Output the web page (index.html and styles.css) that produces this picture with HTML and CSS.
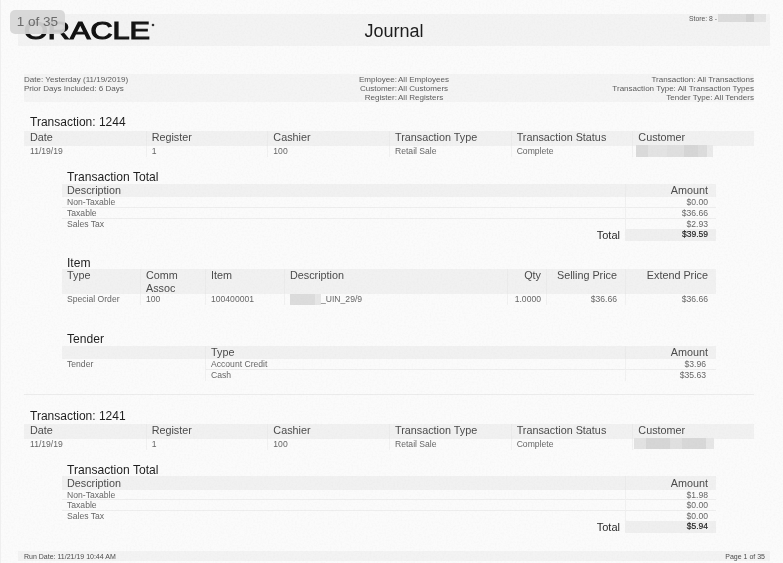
FILE: index.html
```html
<!DOCTYPE html>
<html lang="en">
<head>
<meta charset="utf-8">
<title>Journal</title>
<link rel="stylesheet" href="styles.css">
</head>
<body>
<main class="page">
  <div class="badge">1 of 35</div>
  <svg class="grain" width="783" height="563" aria-hidden="true">
    <filter id="noise" x="0" y="0" width="100%" height="100%">
      <feTurbulence type="fractalNoise" baseFrequency="0.55" numOctaves="2" seed="4"/>
      <feColorMatrix values="0 0 0 0 0.35  0 0 0 0 0.35  0 0 0 0 0.35  0 0 0 1.6 -0.62"/>
    </filter>
    <rect width="783" height="563" filter="url(#noise)"/>
  </svg>
  <header class="report-head">
    <div class="logo">
      <svg width="136" height="24" viewBox="0 0 136 24" aria-label="Oracle logo">
        <text class="logo-text" x="0" y="20" textLength="126" lengthAdjust="spacingAndGlyphs">ORACLE</text>
        <circle cx="129" cy="6" r="1.3" fill="#333"/>
      </svg>
    </div>
    <h1 class="report-title">Journal</h1>
    <div class="store"><span>Store: 8 -</span><span class="redact redact-store"></span></div>
  </header>

  <section class="filters">
    <div class="filter-left">
      <div>Date: Yesterday (11/19/2019)</div>
      <div>Prior Days Included: 6 Days</div>
    </div>
    <div class="filter-mid">
      <span class="lbl">Employee:</span><span>All Employees</span>
      <span class="lbl">Customer:</span><span>All Customers</span>
      <span class="lbl">Register:</span><span>All Registers</span>
    </div>
    <div class="filter-right">
      <div>Transaction: All Transactions</div>
      <div>Transaction Type: All Transaction Types</div>
      <div>Tender Type: All Tenders</div>
    </div>
  </section>

  <article class="txn">
    <h2 class="txn-title">Transaction: 1244</h2>
    <div class="grid grid-txn">
      <div class="th">Date</div><div class="th">Register</div><div class="th">Cashier</div><div class="th">Transaction Type</div><div class="th">Transaction Status</div><div class="th">Customer</div>
      <div class="td">11/19/19</div><div class="td">1</div><div class="td">100</div><div class="td">Retail Sale</div><div class="td">Complete</div><div class="td"><span class="redact redact-cust"></span></div>
    </div>

    <section class="sub sub-total">
      <h3 class="sub-title">Transaction Total</h3>
      <div class="grid grid-amount">
        <div class="th">Description</div><div class="th num">Amount</div>
        <div class="td ruled">Non-Taxable</div><div class="td num ruled">$0.00</div>
        <div class="td ruled">Taxable</div><div class="td num ruled">$36.66</div>
        <div class="td short">Sales Tax</div><div class="td num short">$2.93</div>
        <div class="total-label">Total</div><div class="total-value">$39.59</div>
      </div>
    </section>

    <section class="sub sub-item">
      <h3 class="sub-title">Item</h3>
      <div class="grid grid-item">
        <div class="th tall">Type</div><div class="th tall">Comm Assoc</div><div class="th tall">Item</div><div class="th tall">Description</div><div class="th tall num tight">Qty</div><div class="th tall num">Selling Price</div><div class="th tall num">Extend Price</div>
        <div class="td">Special Order</div><div class="td">100</div><div class="td">100400001</div><div class="td"><span class="redact redact-desc"></span>_UIN_29/9</div><div class="td num tight">1.0000</div><div class="td num">$36.66</div><div class="td num">$36.66</div>
      </div>
    </section>

    <section class="sub sub-tender">
      <h3 class="sub-title">Tender</h3>
      <div class="grid grid-tender">
        <div class="th"></div><div class="th">Type</div><div class="th num">Amount</div>
        <div class="td">Tender</div><div class="td ruled">Account Credit</div><div class="td num wide ruled">$3.96</div>
        <div class="td"></div><div class="td">Cash</div><div class="td num wide">$35.63</div>
      </div>
    </section>
  </article>

  <hr class="divider">

  <article class="txn txn-second">
    <h2 class="txn-title">Transaction: 1241</h2>
    <div class="grid grid-txn">
      <div class="th">Date</div><div class="th">Register</div><div class="th">Cashier</div><div class="th">Transaction Type</div><div class="th">Transaction Status</div><div class="th">Customer</div>
      <div class="td">11/19/19</div><div class="td">1</div><div class="td">100</div><div class="td">Retail Sale</div><div class="td">Complete</div><div class="td"><span class="redact redact-cust2"></span></div>
    </div>

    <section class="sub sub-total">
      <h3 class="sub-title">Transaction Total</h3>
      <div class="grid grid-amount">
        <div class="th">Description</div><div class="th num">Amount</div>
        <div class="td short ruled">Non-Taxable</div><div class="td num short ruled">$1.98</div>
        <div class="td ruled">Taxable</div><div class="td num ruled">$0.00</div>
        <div class="td short">Sales Tax</div><div class="td num short">$0.00</div>
        <div class="total-label">Total</div><div class="total-value">$5.94</div>
      </div>
    </section>
  </article>

  <footer class="report-foot">
    <span>Run Date: 11/21/19 10:44 AM</span>
    <span>Page 1 of 35</span>
  </footer>
</main>
</body>
</html>
```

FILE: styles.css
```css
* { box-sizing: border-box; }
html, body { margin: 0; padding: 0; }
body { width: 783px; height: 563px; overflow: hidden; background: #fbfbfb; font-family: "Liberation Sans", Arial, sans-serif; color: #666; }

.page { position: relative; width: 783px; height: 563px; padding-top: 14px; overflow: hidden; background: #fbfbfb; border-left: 1px solid #efefef; filter: blur(.2px); }
.page > * { margin-left: 17px; }

.grain { position: absolute; left: 0; top: 0; margin: 0; pointer-events: none; opacity: .06; z-index: 1; }

.badge { position: absolute; left: 9px; top: 10px; margin: 0; width: 55px; height: 24px; border-radius: 5px; background: rgba(214, 214, 214, .93); color: #6a6a6a; font-size: 13.5px; line-height: 23px; text-align: center; z-index: 2; }

.report-head { display: grid; grid-template-columns: 1fr auto 1fr; width: 752px; height: 32px; background: #f3f3f3; }
.logo { padding: 5px 0 0 6px; height: 32px; }
.logo svg { display: block; overflow: visible; }
.logo-text { font-family: "Liberation Sans", Arial, sans-serif; font-size: 23px; font-weight: 400; fill: #111; stroke: #111; stroke-width: 1.1px; }
.report-title { margin: 0; padding-top: 7px; font-size: 18px; line-height: 21px; font-weight: 400; color: #1c1c1c; }
.store { display: flex; justify-content: flex-end; padding-right: 4px; font-size: 6.8px; line-height: 9px; color: #555; gap: 1px; }

.redact { display: inline-block; background-color: #e6e6e6; }
.redact-store { width: 48px; height: 8px; background-image: linear-gradient(90deg, #dcdcdc 0 58%, #d2d2d2 58% 75%, #e4e4e4 75%); }
.redact-cust { width: 77px; height: 12px; margin: -1px 0 0 -2px; background-image: linear-gradient(90deg, #dadada 0 16%, #e3e3e3 16% 40%, #dfdfdf 40% 62%, #d6d6d6 62% 80%, #dcdcdc 80% 92%, #eaeaea 92%); }
.redact-cust2 { width: 80px; height: 11px; margin: -1px 0 0 -4px; background-image: linear-gradient(90deg, #e2e2e2 0 15%, #d6d6d6 15% 45%, #e0e0e0 45% 60%, #d8d8d8 60% 90%, #e6e6e6 90%); }
.redact-desc { width: 31px; height: 11px; vertical-align: top; background-image: linear-gradient(90deg, #dcdcdc 0 80%, #e6e6e6 80%); }

.filters { display: grid; grid-template-columns: 334px 93px 1fr; width: 730px; height: 28px; margin: 28px 0 0 23px !important; padding-top: 1px; background: #f4f4f4; font-size: 8.05px; line-height: 9px; color: #5c5c5c; }
.filter-mid { display: grid; grid-template-columns: 39px 1fr; column-gap: 1px; align-content: start; }
.lbl { text-align: right; white-space: nowrap; }
.filter-right { text-align: right; }

.txn { width: 730px; margin-left: 23px !important; }
.txn-title { margin: 12px 0 0; padding-left: 6px; height: 17px; font-size: 12px; line-height: 16px; font-weight: 400; color: #1e1e1e; }
.txn-second .txn-title { line-height: 18px; }

.grid { display: grid; }
.grid-txn { grid-template-columns: repeat(6, 1fr); }
.grid-amount { grid-template-columns: 563px 91px; }
.grid-item { grid-template-columns: 78px 65px 79px 223px 39px 79px 91px; }
.grid-tender { grid-template-columns: 143px 420px 91px; }

.th { padding: 0 5px; height: 15px; background: #f1f1f1; border-left: 1px solid #ebebeb; font-size: 10.8px; line-height: 13px; color: #4a4a4a; }
.td { padding: 0 5px; height: 11px; border-left: 1px solid #f1f1f1; font-size: 8.6px; line-height: 11px; color: #666; }
.grid > .th:first-child { border-left: 0; padding-left: 6px; }
.sub .grid > .th:first-child { padding-left: 5px; }
.grid-txn .td:nth-child(7) { border-left: 0; padding-left: 6px; }
.num { text-align: right; padding-right: 8px; }
.tight { padding-right: 5px; }
.wide { padding-right: 10px; }
.ruled { border-bottom: 1px solid #eeeeee; }
.short { height: 10px; line-height: 10px; }

.sub { width: 654px; margin-left: 38px; }
.sub-title { margin: 0; padding-left: 5px; height: 14px; font-size: 12.1px; line-height: 14px; font-weight: 400; color: #1e1e1e; }
.sub-total { margin-top: 13px; }
.sub-item { margin-top: 14px; }
.sub-item .sub-title { line-height: 16px; }
.sub-tender { margin-top: 27px; }
.sub .th { height: 13px; line-height: 13px; }
.sub .tall { height: 25px; line-height: 12.5px; }
.sub > .grid > .td { padding-left: 5px; }
.sub-total .td:nth-child(odd) { border-left: 0; }
.sub-tender .td:nth-child(4), .sub-tender .td:nth-child(7) { border-left: 0; }
.sub-item .td:nth-child(8) { border-left: 0; }

.total-label { height: 12px; padding-right: 5px; text-align: right; font-size: 11px; line-height: 13px; color: #2a2a2a; }
.total-value { height: 12px; padding-right: 8px; background: #efefef; text-align: right; font-size: 8.5px; line-height: 11px; color: #1a1a1a; -webkit-text-stroke: .15px #1a1a1a; }

.divider { width: 730px; height: 1px; margin: 13px 0 0 23px !important; border: 0; background: #ececec; }
.txn-second .sub-total { margin-top: 12px; }
.txn-second .sub-title { line-height: 16px; }
.txn-second .sub .th { height: 14px; line-height: 14px; }

.report-foot { display: flex; justify-content: space-between; width: 752px; height: 10px; margin-top: 18px; padding: 0 5px 0 6px; background: #f3f3f3; font-size: 7px; line-height: 11px; color: #4a4a4a; }
```
